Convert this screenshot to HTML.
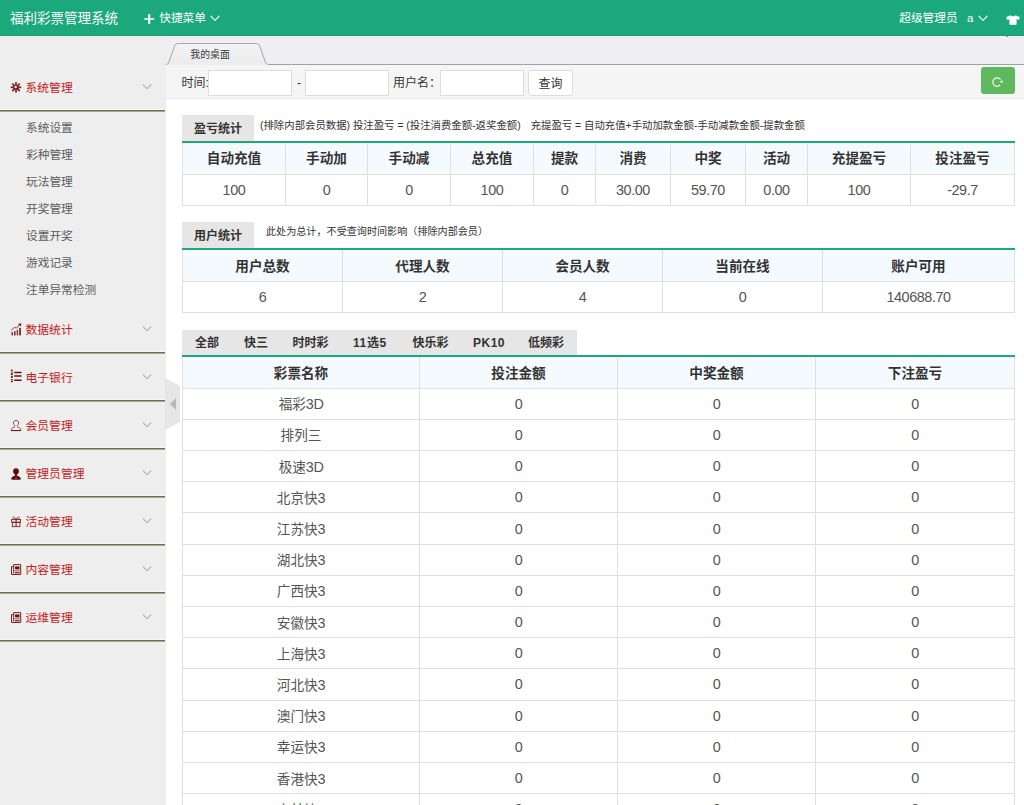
<!DOCTYPE html>
<html lang="zh-CN">
<head>
<meta charset="utf-8">
<title>福利彩票管理系统</title>
<style>
*{box-sizing:border-box;margin:0;padding:0}
html,body{width:1024px;height:805px;overflow:hidden;background:#fff}
body{font-family:"Liberation Sans","Noto Sans CJK SC",sans-serif;font-size:12px;color:#333;position:relative}
.abs{position:absolute}
/* header */
#hd{position:absolute;left:0;top:0;width:1024px;height:36px;background:#1ba97b;color:#fff;border-bottom:1px solid #11a476}
#hd .t{position:absolute;white-space:nowrap;line-height:36px;top:1px}
#logo{left:10px;font-size:13.5px}
/* sidebar */
#aside{position:absolute;left:0;top:36px;width:166px;height:769px;background:#eee}
.dt{position:absolute;left:0;width:166px;height:48px;margin-top:1px;color:#c81a1a;font-size:11.8px;line-height:48px;white-space:nowrap}
.dt::after{content:"";position:absolute;left:0;top:44px;width:165px;height:4px;background:linear-gradient(#eee 0,#eee 1px,#f7f7f7 1px,#f7f7f7 2px,#6f7155 2px,#6f7155 3px,#a3a491 3px,#a3a491 4px)}
.dt span{position:absolute;left:25.500px;top:0}
.dt svg.ic{position:absolute;left:10px;top:17px;width:12px;height:13px}
.dt svg.chev{position:absolute;left:141.600px;top:19px;width:10px;height:8px}
.sub{position:absolute;left:26px;font-size:11.7px;color:#5c5c5c;line-height:27px;height:27px;white-space:nowrap}
/* main */
#tabbar{position:absolute;left:166px;top:36px;width:858px;height:29px;background:#efeff1}
#filter{position:absolute;left:166px;top:65px;width:858px;height:34px;background:#f5f5f5;border-bottom:1px solid #ebebeb}
.inp{position:absolute;top:5px;height:26px;width:84px;background:#fff;border:1px solid #ddd}
.lbl{position:absolute;top:1px;line-height:34px;font-size:12px;color:#333;white-space:nowrap}
.btnq{position:absolute;left:362px;top:5px;width:45px;height:26px;background:#fff;border:1px solid #ddd;border-radius:3px;text-align:center;line-height:26px;font-size:12px;color:#333}
.btnr{position:absolute;left:815px;top:2px;width:34px;height:27px;background:#5eb95e;border-radius:3px}
/* section tabs */
.stab{position:absolute;height:26px;background:#e6e6e6;font-weight:bold;font-size:12px;line-height:29px;color:#333;text-align:center;white-space:nowrap;overflow:hidden}
.tb{position:absolute;top:0}
.desc{position:absolute;font-size:10.4px;color:#333;white-space:nowrap;line-height:14px}
.gline{position:absolute;left:182px;width:833px;height:2px;background:#19a97b}
table{position:absolute;left:182px;width:832px;border-collapse:collapse;table-layout:fixed}
th,td{border:1px solid #e0e0e0;text-align:center;height:31.2px;padding:0;font-size:13.6px;line-height:20px;overflow:hidden;white-space:nowrap}
th{background:#f5fafe;font-weight:bold;color:#333;border-top:none;padding-top:3px}
#t1 th{padding-top:2px}
td{color:#555;font-weight:normal}
td.n{font-size:14.4px;letter-spacing:-.42px}
td.c{padding-top:2px}
td.c b{font-weight:normal;font-size:14.4px;letter-spacing:-.42px}
</style>
</head>
<body>
<div id="hd">
  <div class="t" id="logo">福利彩票管理系统</div>
  <svg class="abs" style="left:144px;top:13.500px" width="11" height="10" viewBox="0 0 11 10"><path d="M5.200 0.200v9.600" stroke="#fff" stroke-width="2.200" fill="none"/><path d="M0.300 5h10" stroke="#fff" stroke-width="1.500" fill="none"/></svg>
  <div class="t" style="left:159.200px;top:.4px;font-size:11.700px">快捷菜单</div>
  <svg class="abs" style="left:210.300px;top:15.300px" width="10" height="7" viewBox="0 0 10 7"><path d="M0.7 1l4.3 4.3L9.3 1" stroke="#fff" stroke-width="1.150" fill="none"/></svg>
  <div class="t" style="left:899.200px;top:.4px;font-size:11.700px">超级管理员</div>
  <div class="t" style="left:967px;top:0;font-size:11.600px">a</div>
  <svg class="abs" style="left:978.200px;top:15.300px" width="10" height="7" viewBox="0 0 10 7"><path d="M0.7 1l4.3 4.3L9.3 1" stroke="#fff" stroke-width="1.150" fill="none"/></svg>
  <svg class="abs" style="left:1006px;top:14.600px" width="14" height="10" viewBox="0 0 14 11" preserveAspectRatio="none"><path d="M4.400 0.300C5.200 1.700 8.800 1.700 9.600 0.300L14 2.600 12.700 5.600 10.600 4.700V10.800H3.400V4.700L1.300 5.600 0 2.600Z" fill="#fff"/></svg>
</div>

<div id="aside">
  <div class="dt" style="top:27px"><svg class="ic" viewBox="0 0 12 13"><g fill="#7c2020"><ellipse cx="6.00" cy="2.15" rx="1.2" ry="1" transform="rotate(90 6.00 2.15)"/><ellipse cx="8.97" cy="3.38" rx="1.2" ry="1" transform="rotate(135 8.97 3.38)"/><ellipse cx="10.20" cy="6.35" rx="1.2" ry="1" transform="rotate(180 10.20 6.35)"/><ellipse cx="8.97" cy="9.32" rx="1.2" ry="1" transform="rotate(225 8.97 9.32)"/><ellipse cx="6.00" cy="10.55" rx="1.2" ry="1" transform="rotate(270 6.00 10.55)"/><ellipse cx="3.03" cy="9.32" rx="1.2" ry="1" transform="rotate(315 3.03 9.32)"/><ellipse cx="1.80" cy="6.35" rx="1.2" ry="1" transform="rotate(360 1.80 6.35)"/><ellipse cx="3.03" cy="3.38" rx="1.2" ry="1" transform="rotate(405 3.03 3.38)"/><circle cx="6" cy="6.35" r="3.2"/></g><circle cx="5.600" cy="5.900" r="1.250" fill="#eee"/></svg><span>系统管理</span><svg class="chev" viewBox="0 0 10 8"><path d="M0.8 1.5l4.2 4.2 4.2-4.2" stroke="#b8b8b8" stroke-width="1.150" fill="none"/></svg></div>
  <div class="sub" style="top:78px">系统设置</div>
  <div class="sub" style="top:105px">彩种管理</div>
  <div class="sub" style="top:132px">玩法管理</div>
  <div class="sub" style="top:159px">开奖管理</div>
  <div class="sub" style="top:186px">设置开奖</div>
  <div class="sub" style="top:213px">游戏记录</div>
  <div class="sub" style="top:240px">注单异常检测</div>
  <div class="dt" style="top:269px"><svg class="ic" viewBox="0 0 12 13"><g fill="#803030"><rect x="1.500" y="9.100" width="1.500" height="3.300"/><rect x="4" y="8.200" width="1.600" height="4.200"/><rect x="6.700" y="7" width="1.400" height="5.400"/><rect x="9.100" y="4.900" width="1.900" height="7.500"/></g><path d="M1.200 7.600L4.400 4.200 6.500 5.200 9.500 1.700" stroke="#803030" stroke-width=".9" fill="none"/><path d="M8.100 0.900L11.400 0.200 10.800 3.400Z" fill="#6a1212"/></svg><span>数据统计</span><svg class="chev" viewBox="0 0 10 8"><path d="M0.8 1.5l4.2 4.2 4.2-4.2" stroke="#b8b8b8" stroke-width="1.150" fill="none"/></svg></div>
  <div class="dt" style="top:317px"><svg class="ic" viewBox="0 0 12 13" style="overflow:visible"><path d="M1.900 -1.200V11.200" stroke="#6a1212" stroke-width="2" stroke-dasharray="1.700 .9 2.600 .8 2.300 .9 1.400 .6 1.200 0" fill="none" opacity=".85"/><path d="M4.800 1.500H11M4.800 5.100H11M4.800 9.300H11" stroke="#6a1212" stroke-width="1.500" stroke-linecap="round" fill="none"/></svg><span>电子银行</span><svg class="chev" viewBox="0 0 10 8"><path d="M0.8 1.5l4.2 4.2 4.2-4.2" stroke="#b8b8b8" stroke-width="1.150" fill="none"/></svg></div>
  <div class="dt" style="top:365px"><svg class="ic" viewBox="0 0 12 13"><path d="M6 1.400C4.300 1.400 3.500 2.600 3.500 4 3.500 5.100 4 5.800 4.700 6.300V7.700C4.700 8.400 1.300 8.700 1.300 10.600V11.500H10.800V10.600C10.800 8.700 7.400 8.400 7.400 7.700V6.300C8.100 5.800 8.600 5.100 8.600 4 8.600 2.600 7.700 1.400 6 1.400Z" stroke="#8c3c3c" stroke-width=".9" fill="none"/><path d="M1.100 11.600H11" stroke="#701616" stroke-width="1" fill="none"/></svg><span>会员管理</span><svg class="chev" viewBox="0 0 10 8"><path d="M0.8 1.5l4.2 4.2 4.2-4.2" stroke="#b8b8b8" stroke-width="1.150" fill="none"/></svg></div>
  <div class="dt" style="top:413px"><svg class="ic" viewBox="0 0 12 13"><g fill="#600808"><ellipse cx="6" cy="4.300" rx="2.850" ry="3.150"/><rect x="4.900" y="6.500" width="2.200" height="3"/><path d="M1.200 12.300C1.200 10 2.600 9.300 4.900 8.700L6 9.100 7.100 8.700C9.400 9.300 10.900 10 10.900 12.300 10.900 13 1.200 13 1.200 12.300Z"/></g><rect x="5.550" y="9.700" width=".9" height="2.700" fill="#a06868"/></svg><span>管理员管理</span><svg class="chev" viewBox="0 0 10 8"><path d="M0.8 1.5l4.2 4.2 4.2-4.2" stroke="#b8b8b8" stroke-width="1.150" fill="none"/></svg></div>
  <div class="dt" style="top:461px"><svg class="ic" viewBox="0 0 12 13"><path d="M6 4.200C5.200 1.600 2.300 1.500 2.700 3.100 3 4 6 4.200 6 4.200ZM6.200 4.200C7 1.600 9.900 1.500 9.500 3.100 9.200 4 6.200 4.200 6.200 4.200Z" stroke="#9a5050" stroke-width=".9" fill="none"/><rect x="1.650" y="4.450" width="8.900" height="2.800" stroke="#7a2020" stroke-width=".9" fill="none"/><rect x="2.350" y="7.250" width="7.500" height="4.400" stroke="#7a2020" stroke-width=".9" fill="none"/><path d="M6.100 4.400V11.700" stroke="#8a3636" stroke-width="1.300" fill="none"/></svg><span>活动管理</span><svg class="chev" viewBox="0 0 10 8"><path d="M0.8 1.500l4.200 4.200 4.200-4.200" stroke="#b8b8b8" stroke-width="1.150" fill="none"/></svg></div>
  <div class="dt" style="top:509px"><svg class="ic" viewBox="0 0 12 13"><path d="M3.700 1.600H10.700V11.500H1.500V3.700H3.700ZM3.700 3.700V10.500" stroke="#7a2020" stroke-width="1" fill="none" stroke-linejoin="round"/><rect x="5.100" y="3.400" width="4.400" height="3" fill="#6a1212"/><path d="M4.800 7.900H9.800" stroke="#8a3636" stroke-width=".8"/><rect x="5" y="9" width="4.600" height="1.400" fill="#8a3636"/></svg><span>内容管理</span><svg class="chev" viewBox="0 0 10 8"><path d="M0.8 1.500l4.200 4.200 4.200-4.200" stroke="#b8b8b8" stroke-width="1.150" fill="none"/></svg></div>
  <div class="dt" style="top:557px"><svg class="ic" viewBox="0 0 12 13"><path d="M3.700 1.600H10.700V11.500H1.500V3.700H3.700ZM3.700 3.700V10.500" stroke="#7a2020" stroke-width="1" fill="none" stroke-linejoin="round"/><rect x="5.100" y="3.400" width="4.400" height="3" fill="#6a1212"/><path d="M4.800 7.900H9.800" stroke="#8a3636" stroke-width=".8"/><rect x="5" y="9" width="4.600" height="1.400" fill="#8a3636"/></svg><span>运维管理</span><svg class="chev" viewBox="0 0 10 8"><path d="M0.8 1.500l4.200 4.200 4.200-4.200" stroke="#b8b8b8" stroke-width="1.150" fill="none"/></svg></div>
</div>

<!-- collapse handle -->
<svg class="abs" style="left:165px;top:378px" width="16" height="52" viewBox="0 0 16 52"><path d="M0 0L15 8V44L0 52Z" fill="#e6e6e6"/><path d="M5 26l6-6v12z" fill="#b8b8b8"/></svg>

<div class="abs" style="left:1006px;top:36px;width:2px;height:1px;background:#8a9690;z-index:5"></div>
<div id="tabbar">
  <svg class="abs" style="left:0;top:0" width="858" height="29" viewBox="0 0 858 29"><defs><linearGradient id="tg" x1="0" y1="0" x2="0" y2="1"><stop offset="0" stop-color="#f3f3f3"/><stop offset="1" stop-color="#ececec"/></linearGradient></defs><path d="M0 28.500C1.600 28.500 2.200 27.600 2.800 26L8.600 10.300C9.400 8.200 10.200 7.500 12.400 7.500H90C92.200 7.500 93 8.200 93.800 10.300L99.400 26C100 27.600 100.700 28.500 102.500 28.500" fill="url(#tg)" stroke="#a8a8a8" stroke-width="1"/><path d="M102.500 28.500H858" stroke="#a0a0a0" stroke-width="1" fill="none"/></svg>
  <div class="abs" style="left:24.300px;top:9.400px;font-size:9.900px;line-height:20px;color:#3a3a3a;white-space:nowrap">我的桌面</div>
</div>

<div id="filter">
  <div class="lbl" style="left:15.500px">时间:</div>
  <div class="inp" style="left:42px"></div>
  <div class="lbl" style="left:131px">-</div>
  <div class="inp" style="left:139px"></div>
  <div class="lbl" style="left:227px">用户名：</div>
  <div class="inp" style="left:274px"></div>
  <div class="btnq">查询</div>
  <div class="btnr"><svg class="abs" style="left:10.400px;top:8.800px" width="13" height="12" viewBox="0 0 13 12"><path d="M9.500 3.700A4.200 4.200 0 1 0 9 9" stroke="#fff" stroke-width="1.150" fill="none"/><path d="M8.600 5.400L12 4.200 11.200 7.300Z" fill="#fff"/></svg></div>
</div>

<!-- section 1 -->
<div class="stab" style="left:182px;top:115px;width:72px">盈亏统计</div>
<div class="desc" style="left:260px;top:119px">(排除内部会员数据) 投注盈亏 = (投注消费金额-返奖金额)<span style="display:inline-block;width:10px"></span>充提盈亏 = 自动充值+手动加款金额-手动减款金额-提款金额</div>
<div class="gline" style="top:141px"></div>
<table id="t1" style="top:143px">
<colgroup><col style="width:103px"><col style="width:82px"><col style="width:83px"><col style="width:83px"><col style="width:62px"><col style="width:75px"><col style="width:75px"><col style="width:62px"><col style="width:103px"><col style="width:104px"></colgroup>
<tr><th>自动充值</th><th>手动加</th><th>手动减</th><th>总充值</th><th>提款</th><th>消费</th><th>中奖</th><th>活动</th><th>充提盈亏</th><th>投注盈亏</th></tr>
<tr><td class="n">100</td><td class="n">0</td><td class="n">0</td><td class="n">100</td><td class="n">0</td><td class="n">30.00</td><td class="n">59.70</td><td class="n">0.00</td><td class="n">100</td><td class="n">-29.7</td></tr>
</table>

<!-- section 2 -->
<div class="stab" style="left:182px;top:222px;width:72px">用户统计</div>
<div class="desc" style="left:266px;top:225px;font-size:10.1px">此处为总计，不受查询时间影响（排除内部会员）</div>
<div class="gline" style="top:248px"></div>
<table style="top:250px">
<colgroup><col style="width:160px"><col style="width:160px"><col style="width:160px"><col style="width:160px"><col style="width:192px"></colgroup>
<tr><th>用户总数</th><th>代理人数</th><th>会员人数</th><th>当前在线</th><th>账户可用</th></tr>
<tr><td class="n">6</td><td class="n">2</td><td class="n">4</td><td class="n">0</td><td class="n">140688.70</td></tr>
</table>

<!-- section 3 -->
<div class="stab" style="left:182px;top:330px;width:395px;text-align:left;line-height:27px"><span class="tb" style="left:13px">全部</span><span class="tb" style="left:62px">快三</span><span class="tb" style="left:110.500px">时时彩</span><span class="tb" style="left:171px;letter-spacing:.6px">11选5</span><span class="tb" style="left:230.500px">快乐彩</span><span class="tb" style="left:291px;letter-spacing:.5px">PK10</span><span class="tb" style="left:346px">低频彩</span></div>
<div class="gline" style="top:355px"></div>
<table style="top:357px">
<colgroup><col style="width:237px"><col style="width:198px"><col style="width:198px"><col style="width:199px"></colgroup>
<tr><th>彩票名称</th><th>投注金额</th><th>中奖金额</th><th>下注盈亏</th></tr>
<tr><td class="c">福彩<b>3D</b></td><td class="n">0</td><td class="n">0</td><td class="n">0</td></tr>
<tr><td class="c">排列三</td><td class="n">0</td><td class="n">0</td><td class="n">0</td></tr>
<tr><td class="c">极速<b>3D</b></td><td class="n">0</td><td class="n">0</td><td class="n">0</td></tr>
<tr><td class="c">北京快<b>3</b></td><td class="n">0</td><td class="n">0</td><td class="n">0</td></tr>
<tr><td class="c">江苏快<b>3</b></td><td class="n">0</td><td class="n">0</td><td class="n">0</td></tr>
<tr><td class="c">湖北快<b>3</b></td><td class="n">0</td><td class="n">0</td><td class="n">0</td></tr>
<tr><td class="c">广西快<b>3</b></td><td class="n">0</td><td class="n">0</td><td class="n">0</td></tr>
<tr><td class="c">安徽快<b>3</b></td><td class="n">0</td><td class="n">0</td><td class="n">0</td></tr>
<tr><td class="c">上海快<b>3</b></td><td class="n">0</td><td class="n">0</td><td class="n">0</td></tr>
<tr><td class="c">河北快<b>3</b></td><td class="n">0</td><td class="n">0</td><td class="n">0</td></tr>
<tr><td class="c">澳门快<b>3</b></td><td class="n">0</td><td class="n">0</td><td class="n">0</td></tr>
<tr><td class="c">幸运快<b>3</b></td><td class="n">0</td><td class="n">0</td><td class="n">0</td></tr>
<tr><td class="c">香港快<b>3</b></td><td class="n">0</td><td class="n">0</td><td class="n">0</td></tr>
<tr><td class="c">吉林快<b>3</b></td><td class="n">0</td><td class="n">0</td><td class="n">0</td></tr>
<tr><td class="c">甘肃快<b>3</b></td><td class="n">0</td><td class="n">0</td><td class="n">0</td></tr>
</table>
</body>
</html>
